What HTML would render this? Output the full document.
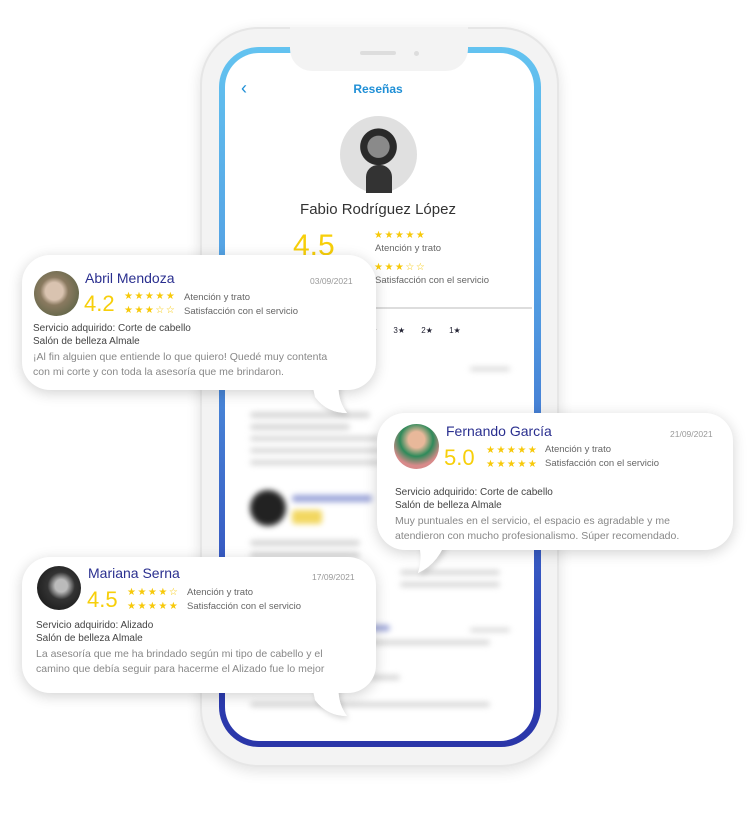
<!DOCTYPE html>
<html><head><meta charset="utf-8"><style>
*{margin:0;padding:0;box-sizing:border-box}
body{width:750px;height:820px;background:#fff;position:relative;overflow:hidden;font-family:"Liberation Sans","DejaVu Sans",sans-serif}
.a{position:absolute}
.phone{left:200px;top:27px;width:359px;height:740px;border-radius:58px;background:#f3f3f3;box-shadow:0 4px 14px rgba(0,0,0,.12),inset 0 0 0 2px #e6e6e6}
.frame{left:219px;top:47px;width:322px;height:700px;border-radius:40px;background:linear-gradient(#63c3f0 0%,#4f97e0 40%,#2e44b8 85%,#2a35a8 100%)}
.screen{left:225px;top:53px;width:309px;height:688px;border-radius:34px;background:#fff;overflow:hidden}
.notch{left:290px;top:27px;width:178px;height:44px;background:#f3f3f3;border-radius:0 0 22px 22px}
.blur{filter:blur(3px)}
.g{background:#d6d6d6;border-radius:3px;position:absolute}
.card{background:#fff;border-radius:28px;box-shadow:0 3px 14px rgba(0,0,0,.18)}
.tl{filter:drop-shadow(2px 3px 3px rgba(0,0,0,.15))}
.nm{color:#2a2f8f;font-size:14px}
.dt{color:#999;font-size:8.5px}
.big{color:#f7cf0a;font-size:22px}
.st{color:#f7c90a;font-size:10px;letter-spacing:1.5px}
.lb{color:#666;font-size:9.5px}
.sv{color:#444;font-size:10px}
.bd{color:#888;font-size:10.5px;line-height:14.5px}
.av{border-radius:50%}
</style></head><body>
<div class="a phone"></div>
<div class="a frame"></div>
<div class="a screen"></div>
<div class="a notch"></div>
<div class="a" style="left:360px;top:51px;width:36px;height:4px;border-radius:2px;background:#ddd"></div>
<div class="a" style="left:414px;top:51px;width:5px;height:5px;border-radius:50%;background:#ddd"></div>

<div class="a" style="left:241px;top:78px;color:#1f8fd6;font-size:18px">&#8249;</div>
<div class="a" style="left:330px;top:82px;width:96px;text-align:center;color:#1f8fd6;font-size:12px;font-weight:bold">Reseñas</div>
<div class="a av" style="left:340px;top:116px;width:77px;height:77px;background:radial-gradient(circle at 50% 40%,#8a8a8a 0 18%,#2a2a2a 19% 30%,#e0e0e0 31%);"></div>
<div class="a" style="left:366px;top:165px;width:26px;height:28px;background:#333;border-radius:12px 12px 0 0"></div>
<div class="a" style="left:278px;top:201px;width:200px;text-align:center;color:#333;font-size:15px">Fabio Rodríguez López</div>
<div class="a" style="left:293px;top:229px;color:#f7cf0a;font-size:30px">4.5</div>
<div class="a st" style="left:374px;top:230px">★★★★★</div>
<div class="a lb" style="left:375px;top:243px">Atención y trato</div>
<div class="a st" style="left:374px;top:262px">★★★☆☆</div>
<div class="a lb" style="left:375px;top:275px">Satisfacción con el servicio</div>
<div class="a" style="left:226px;top:307px;width:306px;height:2px;background:#ddd"></div>
<div class="a" style="left:370px;top:326px;font-size:8px;color:#223;word-spacing:14px">★ 3★ 2★ 1★</div>

<div class="a blur" style="left:0;top:0;width:750px;height:820px">
 <div class="g" style="left:470px;top:367px;width:40px;height:4px"></div>
 <div class="g" style="left:250px;top:412px;width:120px;height:6px"></div>
 <div class="g" style="left:250px;top:424px;width:100px;height:6px"></div>
 <div class="g" style="left:250px;top:436px;width:130px;height:5px"></div>
 <div class="g" style="left:250px;top:448px;width:130px;height:5px"></div>
 <div class="g" style="left:250px;top:460px;width:130px;height:5px"></div>
 <div class="a av" style="left:250px;top:490px;width:36px;height:36px;background:#222"></div>
 <div class="g" style="left:292px;top:495px;width:80px;height:7px;background:#9aa3d8"></div>
 <div class="g" style="left:292px;top:510px;width:30px;height:14px;background:#f2d760"></div>
 <div class="g" style="left:250px;top:540px;width:110px;height:6px"></div>
 <div class="g" style="left:250px;top:552px;width:110px;height:6px"></div>
 <div class="g" style="left:400px;top:570px;width:100px;height:5px"></div>
 <div class="g" style="left:400px;top:582px;width:100px;height:5px"></div>
 <div class="g" style="left:470px;top:628px;width:40px;height:4px"></div>
 <div class="g" style="left:370px;top:625px;width:20px;height:6px;background:#9aa3d8"></div>
 <div class="g" style="left:370px;top:640px;width:120px;height:5px"></div>
 <div class="g" style="left:370px;top:675px;width:30px;height:5px"></div>
 <div class="g" style="left:250px;top:702px;width:240px;height:5px"></div>
</div>

<!-- card 1 -->
<svg class="a tl" style="left:305px;top:375px" width="50" height="45"><path d="M5 0 L35 0 Q30 22 42 38 Q22 38 10 22 Q8 12 5 0Z" fill="#fff"/></svg>
<div class="a card" style="left:22px;top:255px;width:354px;height:135px"></div>
<svg class="a" style="left:305px;top:375px" width="50" height="45"><path d="M5 0 L35 0 Q30 22 42 38 Q22 38 10 22 Q8 12 5 0Z" fill="#fff"/></svg>
<div class="a av" style="left:34px;top:271px;width:45px;height:45px;background:radial-gradient(circle at 45% 45%,#d9c3b0 0 25%,#8a7a60 40%,#4a5a3a)"></div>
<div class="a nm" style="left:85px;top:270px">Abril Mendoza</div>
<div class="a dt" style="left:310px;top:276px">03/09/2021</div>
<div class="a big" style="left:84px;top:291px">4.2</div>
<div class="a st" style="left:124px;top:291px">★★★★★</div>
<div class="a st" style="left:124px;top:305px">★★★☆☆</div>
<div class="a lb" style="left:184px;top:292px">Atención y trato</div>
<div class="a lb" style="left:184px;top:306px">Satisfacción con el servicio</div>
<div class="a sv" style="left:33px;top:323px">Servicio adquirido: Corte de cabello</div>
<div class="a sv" style="left:33px;top:336px">Salón de belleza Almale</div>
<div class="a bd" style="left:33px;top:350px">¡Al fin alguien que entiende lo que quiero! Quedé muy contenta<br>con mi corte y con toda la asesoría que me brindaron.</div>

<!-- card 2 -->
<svg class="a tl" style="left:408px;top:535px" width="50" height="45"><path d="M8 0 L40 0 Q32 28 10 38 Q16 20 8 0Z" fill="#fff"/></svg>
<div class="a card" style="left:377px;top:413px;width:356px;height:137px"></div>
<svg class="a" style="left:408px;top:535px" width="50" height="45"><path d="M8 0 L40 0 Q32 28 10 38 Q16 20 8 0Z" fill="#fff"/></svg>
<div class="a av" style="left:394px;top:424px;width:45px;height:45px;background:radial-gradient(circle at 50% 35%,#e8b89a 0 22%,#2e8a5a 45%,#d88a8a 70%)"></div>
<div class="a nm" style="left:446px;top:423px">Fernando García</div>
<div class="a dt" style="left:670px;top:429px">21/09/2021</div>
<div class="a big" style="left:444px;top:445px">5.0</div>
<div class="a st" style="left:486px;top:445px">★★★★★</div>
<div class="a st" style="left:486px;top:459px">★★★★★</div>
<div class="a lb" style="left:545px;top:444px">Atención y trato</div>
<div class="a lb" style="left:545px;top:458px">Satisfacción con el servicio</div>
<div class="a sv" style="left:395px;top:487px">Servicio adquirido: Corte de cabello</div>
<div class="a sv" style="left:395px;top:500px">Salón de belleza Almale</div>
<div class="a bd" style="left:395px;top:514px">Muy puntuales en el servicio, el espacio es agradable y me<br>atendieron con mucho profesionalismo. Súper recomendado.</div>

<!-- card 3 -->
<svg class="a tl" style="left:305px;top:678px" width="50" height="45"><path d="M5 0 L35 0 Q30 22 42 38 Q22 38 10 22 Q8 12 5 0Z" fill="#fff"/></svg>
<div class="a card" style="left:22px;top:557px;width:354px;height:136px"></div>
<svg class="a" style="left:305px;top:678px" width="50" height="45"><path d="M5 0 L35 0 Q30 22 42 38 Q22 38 10 22 Q8 12 5 0Z" fill="#fff"/></svg>
<div class="a av" style="left:37px;top:566px;width:44px;height:44px;background:radial-gradient(circle at 55% 45%,#bbb 0 18%,#333 40%,#111)"></div>
<div class="a nm" style="left:88px;top:565px">Mariana Serna</div>
<div class="a dt" style="left:312px;top:572px">17/09/2021</div>
<div class="a big" style="left:87px;top:587px">4.5</div>
<div class="a st" style="left:127px;top:587px">★★★★☆</div>
<div class="a st" style="left:127px;top:601px">★★★★★</div>
<div class="a lb" style="left:187px;top:587px">Atención y trato</div>
<div class="a lb" style="left:187px;top:601px">Satisfacción con el servicio</div>
<div class="a sv" style="left:36px;top:620px">Servicio adquirido: Alizado</div>
<div class="a sv" style="left:36px;top:633px">Salón de belleza Almale</div>
<div class="a bd" style="left:36px;top:647px">La asesoría que me ha brindado según mi tipo de cabello y el<br>camino que debía seguir para hacerme el Alizado fue lo mejor</div>
</body></html>
